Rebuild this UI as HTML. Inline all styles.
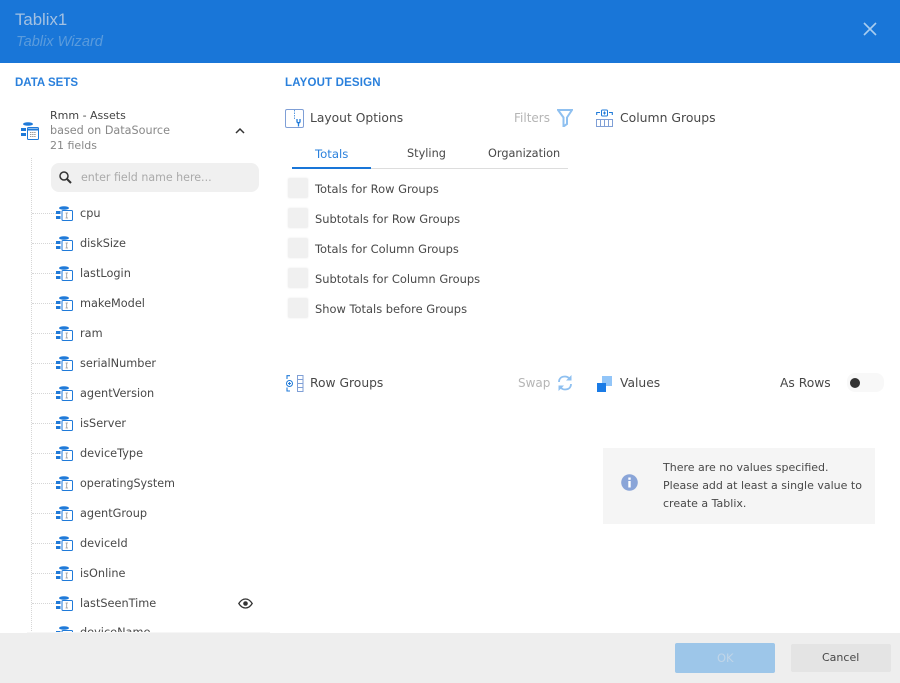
<!DOCTYPE html>
<html><head><meta charset="utf-8"><style>
*{box-sizing:border-box}
html,body{margin:0;padding:0;width:900px;height:683px;overflow:hidden;background:#fff}
body{position:relative;font-family:"DejaVu Sans","Liberation Sans",sans-serif;font-size:11.3px;color:#484848}
.a{position:absolute;white-space:nowrap;line-height:16px}
.l{font-size:12.3px}
.k{font-size:11.45px}
svg{position:absolute;display:block}
.cb{position:absolute;left:288px;width:20px;height:20px;background:#f0f0f0;border-radius:2px;box-shadow:0 0 1px 1px #f8f8f8}
.dh{position:absolute;height:0;width:24px;left:32px;border-top:1px dotted #d6d6d6}
</style></head><body>
<div style="position:absolute;left:0;top:0;width:900px;height:63px;background:#1976d8"></div>
<div class="a" style="left:15px;top:9px;font-size:16.8px;line-height:21px;color:#a3c1e2;font-family:'Liberation Sans',sans-serif">Tablix1</div>
<div class="a" style="left:16px;top:34px;font-size:14.6px;font-style:italic;color:#5a9bdc;font-family:'Liberation Sans',sans-serif">Tablix Wizard</div>
<svg style="left:862px;top:21px" width="16" height="16" viewBox="0 0 16 16"><path d="M2 2L14 14M14 2L2 14" stroke="#a9cdf0" stroke-width="1.6" fill="none"/></svg>

<div class="a" style="left:15px;top:75px;font-size:11.5px;font-weight:bold;color:#2a80dc;font-family:'Liberation Sans',sans-serif">DATA SETS</div>
<div class="a" style="left:285px;top:75px;font-size:11.5px;font-weight:bold;color:#2a80dc;font-family:'Liberation Sans',sans-serif;letter-spacing:.17px">LAYOUT DESIGN</div>

<svg style="left:20px;top:122px" width="19" height="18" viewBox="0 0 19 18"><ellipse cx="8" cy="2" rx="5" ry="1.8" fill="#1f7ad9"/><rect x="1" y="6" width="5" height="3" fill="#1f7ad9"/><rect x="1" y="11" width="5" height="3" fill="#1f7ad9"/><rect x="7.5" y="5.5" width="11" height="12" rx="1" fill="#fff" stroke="#1f7ad9"/><path d="M8 7.5h10" stroke="#1f7ad9" stroke-width="2"/><path d="M10 10.500h6M10 12.500h6M10 14.500h6" stroke="#999" stroke-dasharray="1.400 .7"/></svg>
<div class="a" style="left:50px;top:108px;color:#444;font-size:11px">Rmm - Assets</div>
<div class="a" style="left:50px;top:123px;color:#888;font-size:11.2px">based on DataSource</div>
<div class="a" style="left:50px;top:138px;color:#888;font-size:11px">21 fields</div>
<svg style="left:235px;top:127px" width="10" height="8" viewBox="0 0 10 8"><path d="M1 6L5 2L9 6" stroke="#333" stroke-width="1.500" fill="none"/></svg>
<div style="position:absolute;left:31px;top:158px;height:475px;border-left:1px dotted #d6d6d6"></div>
<div style="position:absolute;left:51px;top:163px;width:208px;height:29px;background:#f0f0f0;border-radius:8px"></div>
<svg style="left:58px;top:170px" width="15" height="15" viewBox="0 0 15 15"><circle cx="6" cy="6" r="4" fill="none" stroke="#333" stroke-width="1.500"/><path d="M9 9L13 13" stroke="#333" stroke-width="2"/></svg>
<div class="a" style="left:81px;top:170px;color:#aaa;font-size:11.05px">enter field name here...</div>

<svg width="0" height="0" style="position:absolute"><defs><g id="f"><ellipse cx="8" cy="2" rx="5" ry="1.800" fill="#1f7ad9"/><rect x="0" y="5" width="4.500" height="3" fill="#1f7ad9"/><rect x="0" y="10" width="4.500" height="3" fill="#1f7ad9"/><rect x="6" y="4.500" width="10.500" height="10" rx="1" fill="#fff" stroke="#1f7ad9"/><path d="M9.500 7h2.500M10.700 7v5M9.500 12h2.500" stroke="#999" stroke-width=".8" fill="none"/></g></defs></svg>

<div class="dh" style="top:213px"></div><svg style="left:56px;top:206px" width="17" height="16"><use href="#f"/></svg><div class="a" style="left:80px;top:206px">cpu</div>
<div class="dh" style="top:243px"></div><svg style="left:56px;top:236px" width="17" height="16"><use href="#f"/></svg><div class="a" style="left:80px;top:236px">diskSize</div>
<div class="dh" style="top:273px"></div><svg style="left:56px;top:266px" width="17" height="16"><use href="#f"/></svg><div class="a" style="left:80px;top:266px">lastLogin</div>
<div class="dh" style="top:303px"></div><svg style="left:56px;top:296px" width="17" height="16"><use href="#f"/></svg><div class="a" style="left:80px;top:296px">makeModel</div>
<div class="dh" style="top:333px"></div><svg style="left:56px;top:326px" width="17" height="16"><use href="#f"/></svg><div class="a" style="left:80px;top:326px">ram</div>
<div class="dh" style="top:363px"></div><svg style="left:56px;top:356px" width="17" height="16"><use href="#f"/></svg><div class="a" style="left:80px;top:356px">serialNumber</div>
<div class="dh" style="top:393px"></div><svg style="left:56px;top:386px" width="17" height="16"><use href="#f"/></svg><div class="a" style="left:80px;top:386px">agentVersion</div>
<div class="dh" style="top:423px"></div><svg style="left:56px;top:416px" width="17" height="16"><use href="#f"/></svg><div class="a" style="left:80px;top:416px">isServer</div>
<div class="dh" style="top:453px"></div><svg style="left:56px;top:446px" width="17" height="16"><use href="#f"/></svg><div class="a" style="left:80px;top:446px">deviceType</div>
<div class="dh" style="top:483px"></div><svg style="left:56px;top:476px" width="17" height="16"><use href="#f"/></svg><div class="a" style="left:80px;top:476px;font-size:11.1px">operatingSystem</div>
<div class="dh" style="top:513px"></div><svg style="left:56px;top:506px" width="17" height="16"><use href="#f"/></svg><div class="a" style="left:80px;top:506px">agentGroup</div>
<div class="dh" style="top:543px"></div><svg style="left:56px;top:536px" width="17" height="16"><use href="#f"/></svg><div class="a" style="left:80px;top:536px">deviceId</div>
<div class="dh" style="top:573px"></div><svg style="left:56px;top:566px" width="17" height="16"><use href="#f"/></svg><div class="a" style="left:80px;top:566px">isOnline</div>
<div class="dh" style="top:603px"></div><svg style="left:56px;top:596px" width="17" height="16"><use href="#f"/></svg><div class="a" style="left:80px;top:596px">lastSeenTime</div>
<div class="dh" style="top:633px"></div><svg style="left:56px;top:626px" width="17" height="16"><use href="#f"/></svg><div class="a" style="left:80px;top:625px">deviceName</div>
<svg style="left:238px;top:598px" width="15" height="11" viewBox="0 0 15 11"><path d="M.8 5.500C3 2 5 1 7.500 1S12 2 14.200 5.500C12 9 10 10 7.500 10S3 9 .8 5.500Z" fill="none" stroke="#333" stroke-width="1.300"/><circle cx="7.500" cy="5.500" r="2.300" fill="#333"/></svg>

<svg style="left:285px;top:109px" width="19" height="19" viewBox="0 0 19 19"><rect x=".5" y=".5" width="18" height="18" rx="1.500" fill="#fff" stroke="#7f9fd6"/><path d="M9.500 1v10" stroke="#5b9ae0" stroke-dasharray="1.500 1"/><path d="M12 10v2.500a1.500 1.500 0 0 0 3 0V10M13.500 13v4.500" stroke="#1f7ad9" stroke-width="1.300" fill="none"/></svg>
<div class="a l" style="left:310px;top:110px">Layout Options</div>
<div class="a" style="left:514px;top:110px;color:#b5b5b5;font-size:12px">Filters</div>
<svg style="left:557px;top:109px" width="16" height="18" viewBox="0 0 16 18"><path d="M1 1H15L10 8.500V15L6.500 17.500V8.500Z" fill="none" stroke="#8fc0f0" stroke-width="2"/></svg>
<svg style="left:596px;top:109px" width="17" height="18" viewBox="0 0 17 18"><path d="M.7 6V3.500H4M13 3.500H16.300V6" fill="none" stroke="#1f7ad9" stroke-width="1.100"/><rect x="5.500" y="1" width="6" height="6" rx="1" fill="#fff" stroke="#1f7ad9"/><path d="M7 4h3M8.500 2.500v3" stroke="#1f7ad9"/><path d="M.5 10.500h16v7H.5zM4.500 10.500v7M8.500 10.500v7M12.500 10.500v7" fill="none" stroke="#7f9fd6"/></svg>
<div class="a l" style="left:620px;top:110px;font-size:12.4px">Column Groups</div>

<div style="position:absolute;left:292px;top:168px;width:276px;height:1px;background:#ddd"></div>
<div style="position:absolute;left:292px;top:167px;width:79px;height:2px;background:#1976d8"></div>
<div class="a" style="left:315px;top:146px;color:#2a80dc;font-size:11.7px">Totals</div>
<div class="a" style="left:407px;top:146px;font-size:11.3px">Styling</div>
<div class="a" style="left:488px;top:146px;font-size:11.3px">Organization</div>

<div class="cb" style="top:178px"></div><div class="a k" style="left:315px;top:181px">Totals for Row Groups</div>
<div class="cb" style="top:208px"></div><div class="a k" style="left:315px;top:211px">Subtotals for Row Groups</div>
<div class="cb" style="top:238px"></div><div class="a k" style="left:315px;top:241px">Totals for Column Groups</div>
<div class="cb" style="top:268px"></div><div class="a k" style="left:315px;top:271px">Subtotals for Column Groups</div>
<div class="cb" style="top:298px"></div><div class="a k" style="left:315px;top:301px">Show Totals before Groups</div>

<svg style="left:286px;top:375px" width="18" height="17" viewBox="0 0 18 17"><path d="M4 .7H1V4M1 12.500V16H4" fill="none" stroke="#1f7ad9" stroke-width="1.100"/><circle cx="3.500" cy="8.500" r="3" fill="#fff" stroke="#1f7ad9"/><path d="M2 8.500h3M3.500 7v3" stroke="#1f7ad9" stroke-width=".9"/><path d="M11.500.5h5.500v16h-5.500zM11.500 4.500h5.500M11.500 8.500h5.500M11.500 12.500h5.500" fill="none" stroke="#7f9fd6"/></svg>
<div class="a l" style="left:310px;top:375px">Row Groups</div>
<div class="a" style="left:518px;top:375px;color:#b5b5b5;font-size:12px">Swap</div>
<svg style="left:557px;top:374px" width="16" height="18" viewBox="0 0 16 18"><path d="M2 8C2 4.500 4.500 2.500 8 2.500c1.800 0 3 .6 4.200 1.800M14 10c0 3.500-2.500 5.500-6 5.500-1.800 0-3-.6-4.200-1.800" fill="none" stroke="#8fc0f0" stroke-width="1.800"/><path d="M9 6.500h5.500V1zM7 11.500H1.500V17z" fill="#8fc0f0"/></svg>
<svg style="left:597px;top:376px" width="16" height="16" viewBox="0 0 16 16"><rect x="5" y="0" width="10" height="10" fill="#92c5f8"/><rect x="0" y="7" width="9" height="9" fill="#1a7be6"/></svg>
<div class="a l" style="left:620px;top:375px">Values</div>
<div class="a l" style="left:780px;top:375px">As Rows</div>
<div style="position:absolute;left:847px;top:373px;width:37px;height:19px;background:#f8f8f8;border-radius:8px"></div>
<div style="position:absolute;left:850px;top:378px;width:10px;height:10px;background:#333;border-radius:50%"></div>

<div style="position:absolute;left:603px;top:448px;width:272px;height:76px;background:#f5f5f5"></div>
<svg style="left:621px;top:474px" width="17" height="17" viewBox="0 0 17 17"><circle cx="8.500" cy="8.500" r="8.300" fill="#8aa5d8"/><rect x="7.300" y="7" width="2.400" height="6.500" fill="#fff"/><rect x="7.300" y="3.500" width="2.400" height="2.300" fill="#fff"/></svg>
<div class="a" style="left:663px;top:459px;font-size:11px;line-height:18px">There are no values specified.<br>Please add at least a single value to<br>create a Tablix.</div>

<div style="position:absolute;left:27px;top:632px;width:243px;height:1px;background:#f6f6f6"></div>
<div style="position:absolute;left:0;top:633px;width:900px;height:50px;background:#eee"></div>
<div style="position:absolute;left:675px;top:643px;width:100px;height:30px;background:#9dc6e9;border-radius:2px"></div>
<div class="a" style="left:717px;top:650px;color:#c0d5e8;font-size:11.5px">OK</div>
<div style="position:absolute;left:791px;top:644px;width:100px;height:28px;background:#e4e4e4;border-radius:2px"></div>
<div class="a" style="left:822px;top:650px;font-size:11px">Cancel</div>
</body></html>
